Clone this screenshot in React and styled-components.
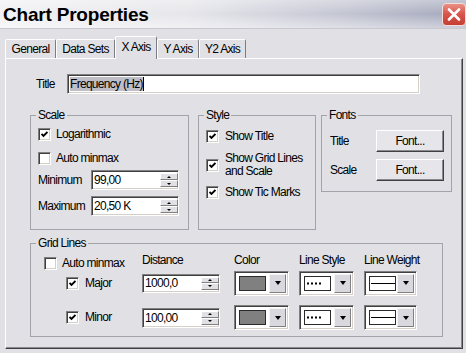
import React from 'react';
import styled, { createGlobalStyle } from 'styled-components';

const FACE = '#e1e0e5';
const FONT = '"Liberation Sans", Arial, sans-serif';

const GlobalStyle = createGlobalStyle`
  html, body { margin: 0; padding: 0; background: ${FACE}; }
  body { font-family: ${FONT}; font-size: 12px; letter-spacing: -0.7px; color: #000; }
  #root { width: 466px; height: 353px; }
`;

const Window = styled.div`
  width: 466px;
  height: 353px;
  background: ${FACE};
  overflow: hidden;
  display: flex;
  flex-direction: column;
`;

const TitleBar = styled.div`
  box-sizing: border-box;
  height: 29px;
  flex: none;
  display: flex;
  align-items: flex-start;
  justify-content: space-between;
  padding-left: 3px;
  border-bottom: 1px solid #c9c8d0;
  background:
    linear-gradient(to bottom, rgba(255,255,255,0.35) 0%, rgba(255,255,255,0) 50%, rgba(255,255,255,0.45) 100%),
    linear-gradient(to right, #f1f1f4 0%, #e6e6eb 40%, #c2c4d1 75%, #a3a7bb 100%);
`;

const TitleText = styled.h1`
  margin: 0;
  padding-top: 4px;
  font-family: ${FONT};
  font-size: 19px;
  line-height: 22px;
  font-weight: bold;
  letter-spacing: -0.2px;
`;

const CloseButton = styled.div`
  box-sizing: border-box;
  margin-top: 3px;
  width: 24px;
  height: 23px;
  border-radius: 4px;
  border: 1px solid #f3dedb;
  background: linear-gradient(to bottom, #ea9084 0%, #d6544a 50%, #c43e34 100%);
  display: flex;
  align-items: center;
  justify-content: center;
`;

const TabStrip = styled.div`
  display: flex;
  align-items: flex-end;
  height: 22px;
  margin: 7px 0 0 5px;
`;

const Tab = styled.div`
  box-sizing: border-box;
  width: ${(p) => p.$w}px;
  height: ${(p) => (p.$active ? 23 : 19)}px;
  margin-bottom: ${(p) => (p.$active ? -1 : 0)}px;
  padding-bottom: ${(p) => (p.$active ? 2 : 0)}px;
  position: relative;
  z-index: ${(p) => (p.$active ? 1 : 0)};
  display: flex;
  align-items: center;
  justify-content: center;
  background: ${FACE};
  border: 1px solid;
  border-bottom: none;
  border-color: #fff #7c7c84 transparent #fff;
  border-radius: 2px 2px 0 0;
  white-space: nowrap;
`;

const Panel = styled.div`
  box-sizing: border-box;
  width: 458px;
  height: 291px;
  margin-left: 5px;
  border: 1px solid;
  border-color: #fff #404040 #404040 #fff;
  box-shadow: inset -1px -1px #8a8a92;
  padding: 15px 0 0 24px;
  display: flex;
  flex-direction: column;
`;

const TitleRow = styled.div`
  display: flex;
  align-items: center;
  margin-left: 6px;
  height: 20px;
`;

const RowLabel = styled.span`
  flex: none;
  width: ${(p) => p.$w}px;
  white-space: nowrap;
`;

const Sunken = styled.div`
  box-sizing: border-box;
  background: #fff;
  border: 1px solid;
  border-color: #808080 #fff #fff #808080;
  box-shadow: inset 1px 1px #404040, inset -1px -1px #d4d0c8;
`;

const TextField = styled(Sunken)`
  width: ${(p) => p.$w}px;
  height: ${(p) => p.$h || 20}px;
  display: flex;
  align-items: center;
  padding-left: 2px;
  white-space: nowrap;
`;

const Selected = styled.span`
  background: #bfbec6;
  line-height: 14px;
`;

const Caret = styled.span`
  width: 1px;
  height: 14px;
  background: #000;
`;

const MiddleRow = styled.div`
  display: flex;
  align-items: flex-start;
  margin-top: 15px;
`;

const Group = styled.fieldset`
  box-sizing: border-box;
  margin: ${(p) => p.$mt || 0}px 0 0 ${(p) => p.$ml || 0}px;
  min-width: 0;
  width: ${(p) => p.$w}px;
  height: ${(p) => p.$h}px;
  border: 1px solid #a3a3ab;
  padding: ${(p) => p.$pt || 0}px 7px 0 7px;
  display: flex;
  flex-direction: column;
`;

const Legend = styled.legend`
  padding: 0 2px;
  margin-left: -2px;
  line-height: 13px;
  font-size: 12px;
`;

const CheckRow = styled.div`
  display: flex;
  align-items: center;
  gap: ${(p) => p.$gap || 5}px;
  margin-top: ${(p) => p.$mt || 0}px;
  padding-left: ${(p) => p.$pl || 0}px;
  align-self: ${(p) => p.$self || 'auto'};
  line-height: 13px;
  white-space: nowrap;
`;

const CheckText = styled.span`
  line-height: ${(p) => p.$lh || 13}px;
`;

const Box = styled(Sunken)`
  flex: none;
  width: 13px;
  height: 13px;
  display: flex;
  align-items: center;
  justify-content: center;
`;

const FieldRow = styled.div`
  display: flex;
  align-items: center;
  margin-top: ${(p) => p.$mt || 0}px;
`;

const SpinWrap = styled(Sunken)`
  width: ${(p) => p.$w}px;
  height: ${(p) => p.$h || 20}px;
  display: flex;
  align-items: stretch;
  padding: 2px 0 2px 2px;
`;

const SpinValue = styled.span`
  flex: 1;
  display: flex;
  align-items: center;
  white-space: nowrap;
`;

const SpinButtons = styled.div`
  width: 18px;
  display: flex;
  flex-direction: column;
`;

const SpinBtn = styled.div`
  box-sizing: border-box;
  flex: 1;
  background: ${FACE};
  border: 1px solid;
  border-color: #fff #808080 #808080 #fff;
  display: flex;
  align-items: center;
  justify-content: center;
`;

const TinyArrow = styled.span`
  width: 0;
  height: 0;
  border-left: 2px solid transparent;
  border-right: 2px solid transparent;
  ${(p) => (p.$up ? 'border-bottom: 2px solid #000;' : 'border-top: 2px solid #000;')}
`;

const FontRow = styled.div`
  display: flex;
  align-items: center;
  height: 22px;
  margin-top: ${(p) => p.$mt || 0}px;
  padding-left: 1px;
`;

const PushButton = styled.div`
  box-sizing: border-box;
  width: 70px;
  height: 22px;
  background: #e6e5ea;
  border: 1px solid;
  border-color: #fff #404040 #404040 #fff;
  box-shadow: inset -1px -1px #8a8a92;
  display: flex;
  align-items: center;
  justify-content: center;
`;

const GridGroupBody = styled.div`
  display: grid;
  grid-template-columns: 98px 92px 65px 65px 53px;
  grid-template-rows: 20px 26px auto;
  align-items: center;
  justify-items: start;
  padding-left: 6px;

  & > :nth-child(n + 11) {
    margin-top: 9px;
  }
`;

const ColLabel = styled.span`
  white-space: nowrap;
  line-height: 13px;
`;

const Combo = styled(Sunken)`
  width: ${(p) => p.$w}px;
  height: 25px;
  display: flex;
  padding: 2px;
`;

const ComboField = styled.div`
  flex: 1;
  display: flex;
  align-items: center;
  padding-left: 2px;
`;

const DropBtn = styled.div`
  box-sizing: border-box;
  width: 17px;
  background: #d9d8de;
  border: 1px solid;
  border-color: #f4f4f6 #808080 #808080 #f4f4f6;
  display: flex;
  align-items: center;
  justify-content: center;
`;

const DropArrow = styled.span`
  width: 0;
  height: 0;
  border-left: 3.5px solid transparent;
  border-right: 3.5px solid transparent;
  border-top: 4px solid #000;
`;

const Swatch = styled.div`
  box-sizing: border-box;
  width: 27px;
  height: 15px;
  border: 1px solid #2a2a2a;
  background: ${(p) => p.$fill || '#fff'};
  display: flex;
  align-items: center;
  justify-content: flex-start;
  padding-left: 1px;
`;

const Check = () => (
  <svg width="7" height="7" viewBox="0 0 7 7">
    <polyline points="0.5,3 2.5,5 6.5,1" fill="none" stroke="#000" strokeWidth="1.9" />
  </svg>
);

const CheckBox = ({ checked }) => <Box>{checked ? <Check /> : null}</Box>;

const Spin = ({ value, w, h }) => (
  <SpinWrap $w={w} $h={h}>
    <SpinValue>{value}</SpinValue>
    <SpinButtons>
      <SpinBtn><TinyArrow $up /></SpinBtn>
      <SpinBtn><TinyArrow /></SpinBtn>
    </SpinButtons>
  </SpinWrap>
);

const SwatchArt = ({ kind }) => {
  if (kind === 'color') return <Swatch $fill="#808080" />;
  if (kind === 'dots')
    return (
      <Swatch>
        <svg width="20" height="3" viewBox="0 0 20 3">
          {[0, 4, 8, 12].map((x) => (
            <rect key={x} x={x + 1} y="0.5" width="2" height="2" fill="#000" />
          ))}
        </svg>
      </Swatch>
    );
  return (
    <Swatch>
      <svg width="24" height="3" viewBox="0 0 24 3">
        <rect x="0" y="1" width="24" height="1" fill="#000" />
      </svg>
    </Swatch>
  );
};

const ComboBox = ({ kind, w }) => (
  <Combo $w={w}>
    <ComboField>
      <SwatchArt kind={kind} />
    </ComboField>
    <DropBtn><DropArrow /></DropBtn>
  </Combo>
);

const tabs = [
  { label: 'General', w: 51 },
  { label: 'Data Sets', w: 59 },
  { label: 'X Axis', w: 42, active: true },
  { label: 'Y Axis', w: 42 },
  { label: 'Y2 Axis', w: 47 },
];

export default function App() {
  return (
    <>
      <GlobalStyle />
      <Window>
        <TitleBar>
          <TitleText>Chart Properties</TitleText>
          <CloseButton>
            <svg width="14" height="13" viewBox="0 0 14 13">
              <path d="M2 1.5 L12 11.5 M12 1.5 L2 11.5" stroke="#fff" strokeWidth="2.6" strokeLinecap="round" />
            </svg>
          </CloseButton>
        </TitleBar>

        <TabStrip>
          {tabs.map((t) => (
            <Tab key={t.label} $w={t.w} $active={t.active}>{t.label}</Tab>
          ))}
        </TabStrip>

        <Panel>
          <TitleRow>
            <RowLabel $w={31}>Title</RowLabel>
            <TextField $w={353}>
              <Selected>Frequency (Hz)</Selected>
              <Caret />
            </TextField>
          </TitleRow>

          <MiddleRow>
            <Group $w={159} $h={121} $pt={6}>
              <Legend>Scale</Legend>
              <CheckRow>
                <CheckBox checked />
                <CheckText>Logarithmic</CheckText>
              </CheckRow>
              <CheckRow $mt={11}>
                <CheckBox />
                <CheckText>Auto minmax</CheckText>
              </CheckRow>
              <FieldRow $mt={5}>
                <RowLabel $w={53}>Minimum</RowLabel>
                <Spin value="99,00" w={88} />
              </FieldRow>
              <FieldRow $mt={6}>
                <RowLabel $w={53}>Maximum</RowLabel>
                <Spin value="20,50 K" w={88} />
              </FieldRow>
            </Group>

            <Group $w={118} $h={121} $pt={8} $ml={9}>
              <Legend>Style</Legend>
              <CheckRow $gap={6}>
                <CheckBox checked />
                <CheckText>Show Title</CheckText>
              </CheckRow>
              <CheckRow $gap={6} $mt={9}>
                <CheckBox checked />
                <CheckText $lh={13}>Show Grid Lines<br />and Scale</CheckText>
              </CheckRow>
              <CheckRow $gap={6} $mt={8}>
                <CheckBox checked />
                <CheckText>Show Tic Marks</CheckText>
              </CheckRow>
            </Group>

            <Group $w={131} $h={83} $pt={8} $ml={5}>
              <Legend>Fonts</Legend>
              <FontRow>
                <RowLabel $w={46}>Title</RowLabel>
                <PushButton>Font...</PushButton>
              </FontRow>
              <FontRow $mt={7}>
                <RowLabel $w={46}>Scale</RowLabel>
                <PushButton>Font...</PushButton>
              </FontRow>
            </Group>
          </MiddleRow>

          <Group $w={413} $h={100} $pt={0} $mt={7}>
            <Legend>Grid Lines</Legend>
            <GridGroupBody>
              <CheckRow $self="end">
                <CheckBox />
                <CheckText>Auto minmax</CheckText>
              </CheckRow>
              <ColLabel>Distance</ColLabel>
              <ColLabel>Color</ColLabel>
              <ColLabel>Line Style</ColLabel>
              <ColLabel>Line Weight</ColLabel>

              <CheckRow $pl={22} $gap={6}>
                <CheckBox checked />
                <CheckText>Major</CheckText>
              </CheckRow>
              <Spin value="1000,0" w={78} h={19} />
              <ComboBox kind="color" w={55} />
              <ComboBox kind="dots" w={55} />
              <ComboBox kind="line" w={53} />

              <CheckRow $pl={22} $gap={6}>
                <CheckBox checked />
                <CheckText>Minor</CheckText>
              </CheckRow>
              <Spin value="100,00" w={78} h={20} />
              <ComboBox kind="color" w={55} />
              <ComboBox kind="dots" w={55} />
              <ComboBox kind="line" w={53} />
            </GridGroupBody>
          </Group>
        </Panel>
      </Window>
    </>
  );
}
